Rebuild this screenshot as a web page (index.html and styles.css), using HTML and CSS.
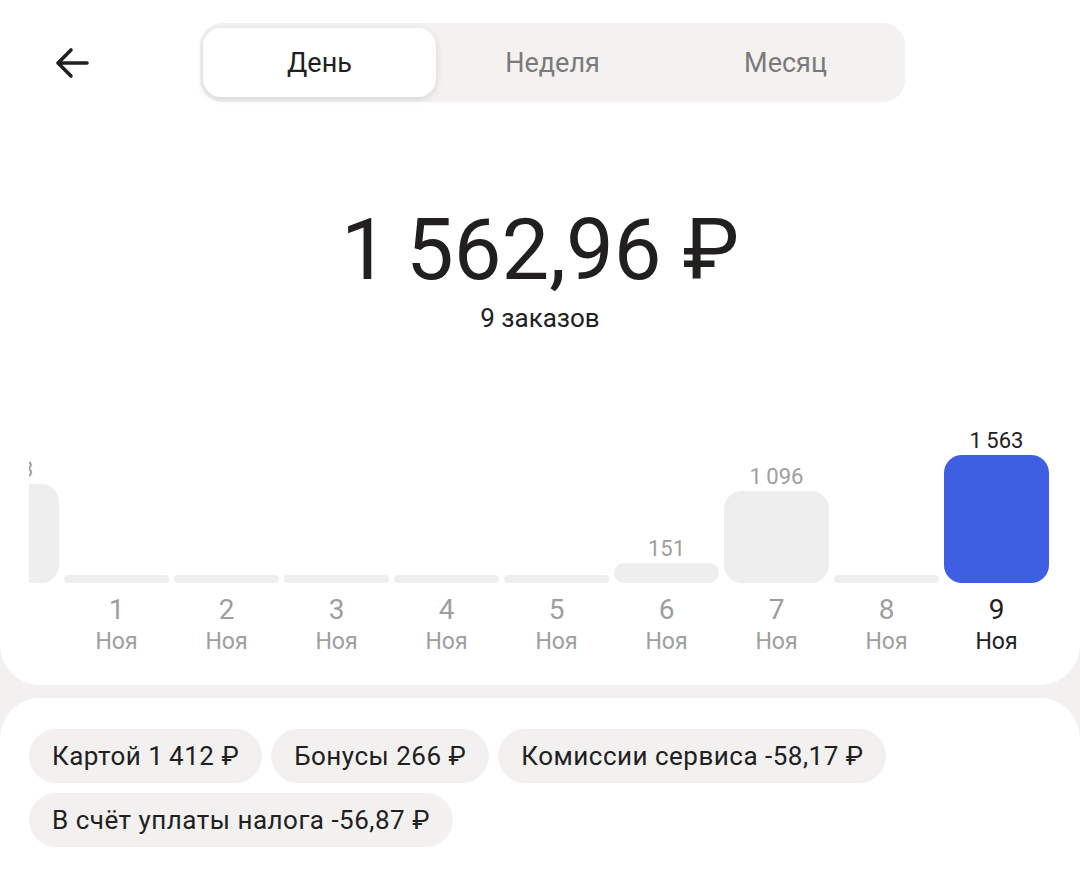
FILE: index.html
```html
<!DOCTYPE html>
<html lang="ru">
<head>
    <meta charset="UTF-8">
    <meta name="viewport" content="width=device-width, initial-scale=1.0">
    <title>Доход за день</title>
    <link rel="stylesheet" href="styles.css">
</head>
<body>
    <div class="card card-top">
        <header class="header">
            <button class="back" aria-label="Назад">
                <svg width="34" height="32" viewBox="0 0 34 32">
                    <path d="M32 16H3M16 3L3 16L16 29" fill="none" stroke="#21201f" stroke-width="3.6" stroke-linecap="round" stroke-linejoin="round"/>
                </svg>
            </button>
            <div class="tabs">
                <div class="tab active">День</div>
                <div class="tab">Неделя</div>
                <div class="tab">Месяц</div>
            </div>
        </header>

        <div class="total">
            <div class="amount">1&thinsp;562,96 ₽</div>
            <div class="orders">9 заказов</div>
        </div>

        <div class="chart">
            <div class="columns">
                <!-- generated below -->
            </div>
        </div>
    </div>

    <div class="card card-bottom">
        <div class="chips">
            <span class="chip">Картой 1&thinsp;412 ₽</span>
            <span class="chip">Бонусы 266 ₽</span>
            <span class="chip">Комиссии сервиса -58,17 ₽</span>
            <span class="chip">В счёт уплаты налога -56,87 ₽</span>
        </div>
    </div>

    <script>
        const days = [
            { day: 31, month: 'Окт', value: 1183 },
            { day: 1, month: 'Ноя', value: 0 },
            { day: 2, month: 'Ноя', value: 0 },
            { day: 3, month: 'Ноя', value: 0 },
            { day: 4, month: 'Ноя', value: 0 },
            { day: 5, month: 'Ноя', value: 0 },
            { day: 6, month: 'Ноя', value: 151 },
            { day: 7, month: 'Ноя', value: 1096 },
            { day: 8, month: 'Ноя', value: 0 },
            { day: 9, month: 'Ноя', value: 1563 }
        ];

        const max = Math.max(...days.map(d => d.value));
        const columns = document.querySelector('.columns');

        function formatValue(v) {
            return v >= 1000 ? Math.floor(v / 1000) + '\u2009' + String(v % 1000).padStart(3, '0') : String(v);
        }

        let html = '';
        days.forEach((d, i) => {
            const active = i === days.length - 1;
            const height = 8 + Math.round(d.value / max * 120);
            const radius = Math.min(18, height / 2);
            html += `
                <div class="column${active ? ' active' : ''}">
                    <div class="bar-area">
                        ${d.value ? `<div class="value">${formatValue(d.value)}</div>` : ''}
                        <div class="bar" style="height: ${height}px; border-radius: ${radius}px"></div>
                    </div>
                    <div class="day">${d.day}</div>
                    <div class="month">${d.month}</div>
                </div>
            `;
        });
        columns.innerHTML = html;
    </script>
</body>
</html>
```

FILE: styles.css
```css
* {
    box-sizing: border-box;
    margin: 0;
    padding: 0;
}
body {
    font-family: Roboto, "Noto Sans", sans-serif;
    color: #21201f;
    background-color: #f2f1ef;
    height: 100vh;
    overflow: hidden;
    display: flex;
    flex-direction: column;
}
.card {
    background-color: #fff;
}
.card-top {
    border-radius: 0 0 40px 40px;
    padding-bottom: 29px;
}
.card-bottom {
    flex: 1;
    margin-top: 13px;
    border-radius: 40px 40px 0 0;
    padding: 31px 29px;
}
.header {
    display: flex;
    align-items: center;
    padding: 23px 0 0 55px;
}
.back {
    border: none;
    background: none;
    width: 34px;
    height: 32px;
    display: flex;
}
.tabs {
    margin-left: 111px;
    width: 705px;
    height: 79px;
    display: flex;
    padding: 5px 3px;
    background-color: #f3f2f0;
    border-radius: 22px;
}
.tab {
    flex: 1;
    display: flex;
    align-items: center;
    justify-content: center;
    font-size: 27px;
    color: #7a7a7a;
    border-radius: 18px;
}
.tab.active {
    background-color: #fff;
    color: #21201f;
    box-shadow: 0 2px 7px rgba(0, 0, 0, 0.13);
}
.total {
    text-align: center;
    margin-top: 105px;
}
.amount {
    font-size: 85px;
    line-height: 87px;
}
.orders {
    margin-top: 8px;
    font-size: 26px;
    line-height: 32px;
}
.chart {
    margin: 76px 29px 0;
    overflow: hidden;
}
.columns {
    display: flex;
    gap: 5px;
    margin-left: -75px;
}
.column {
    flex: 0 0 105px;
    text-align: center;
    color: #9e9e9e;
}
.bar-area {
    height: 173px;
    display: flex;
    flex-direction: column;
    justify-content: flex-end;
}
.value {
    font-size: 22px;
    line-height: 26px;
    margin-bottom: 1px;
}
.bar {
    background-color: #eeeeee;
}
.day {
    margin-top: 11px;
    font-size: 28px;
    line-height: 32px;
}
.month {
    margin-top: 2px;
    font-size: 23px;
    line-height: 28px;
}
.column.active {
    color: #21201f;
}
.column.active .bar {
    background-color: #3e5fe1;
}
.chips {
    display: flex;
    flex-wrap: wrap;
    gap: 10px 9px;
}
.chip {
    height: 54px;
    line-height: 54px;
    padding: 0 23px;
    border-radius: 27px;
    background-color: #f2f1ef;
    font-size: 26px;
    letter-spacing: 0.5px;
    white-space: nowrap;
}
```
